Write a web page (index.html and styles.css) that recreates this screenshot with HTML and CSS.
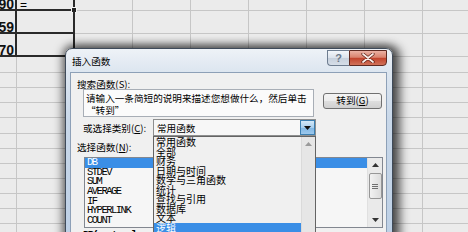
FILE: index.html
```html
<!DOCTYPE html>
<html lang="zh-CN">
<head>
<meta charset="utf-8">
<title>插入函数</title>
<link rel="stylesheet" href="styles.css">
</head>
<body>
<div class="sheet">
  <div class="row top r0">
    <div class="cell num">90</div>
    <div class="cell val eq">=<span class="handle"></span></div>
    <div class="fill"></div>
  </div>
  <div class="row top r1">
    <div class="cell num">59</div>
    <div class="cell val"></div>
    <div class="fill"></div>
  </div>
  <div class="row top r1">
    <div class="cell num">70</div>
    <div class="cell val"></div>
    <div class="fill"></div>
  </div>
  <div class="row h16"></div>
  <div class="row"></div>
  <div class="row"></div>
  <div class="row"></div>
  <div class="row h16"></div>
  <div class="row"></div>
  <div class="row"></div>
  <div class="row"></div>
  <div class="row"></div>
  <div class="row"></div>
  <div class="row"></div>
  <div class="row"></div>
</div>

<div class="dlg">
  <div class="titlebar">
    <span class="title">插入函数</span>
    <div class="capbtns">
      <span class="help">?</span>
      <span class="close">
        <svg width="14" height="10" viewBox="0 0 14 10"><path d="M2 1 L12 9 M12 1 L2 9" stroke="#5a1d12" stroke-width="3.2" stroke-linecap="round"/><path d="M2 1 L12 9 M12 1 L2 9" stroke="#fbeeea" stroke-width="1.8" stroke-linecap="round"/></svg>
      </span>
    </div>
  </div>
  <div class="client">
    <div class="lbl-search">搜索函数(<u>S</u>):</div>
    <div class="search-row">
      <div class="search-box">请输入一条简短的说明来描述您想做什么，然后单击<br>“转到”</div>
      <div class="go">转到(<u>G</u>)</div>
    </div>
    <div class="cat-row">
      <span class="lbl-cat">或选择类别(<u>C</u>):</span>
      <div class="select">
        <span class="sel-text">常用函数</span>
        <span class="arrow"><svg width="7" height="4" viewBox="0 0 7 4"><path d="M0 0 H7 L3.5 4 Z" fill="#111"/></svg></span>
      </div>
    </div>
    <div class="lbl-fn">选择函数(<u>N</u>):</div>
    <div class="listbox">
      <div class="items">
        <div class="item on">DB</div>
        <div class="item">STDEV</div>
        <div class="item">SUM</div>
        <div class="item">AVERAGE</div>
        <div class="item">IF</div>
        <div class="item">HYPERLINK</div>
        <div class="item">COUNT</div>
      </div>
      <div class="vscroll">
        <div class="sbtn"><svg width="7" height="4" viewBox="0 0 7 4"><path d="M0 4 H7 L3.5 0 Z" fill="#333"/></svg></div>
        <div class="thumb"><span class="grip"></span><span class="grip"></span><span class="grip"></span></div>
        <div class="track"></div>
        <div class="sbtn"><svg width="7" height="4" viewBox="0 0 7 4"><path d="M0 0 H7 L3.5 4 Z" fill="#333"/></svg></div>
      </div>
    </div>
    <div class="desc">DB(cost,salvage,life,period,month)</div>
  </div>

  <div class="popup">
    <div class="pitems">
      <div class="pitem">常用函数</div>
      <div class="pitem">全部</div>
      <div class="pitem">财务</div>
      <div class="pitem">日期与时间</div>
      <div class="pitem">数学与三角函数</div>
      <div class="pitem">统计</div>
      <div class="pitem">查找与引用</div>
      <div class="pitem">数据库</div>
      <div class="pitem">文本</div>
      <div class="pitem on">逻辑</div>
    </div>
    <div class="pscroll">
      <svg width="7" height="4" viewBox="0 0 7 4"><path d="M0 4 H7 L3.5 0 Z" fill="#9a9a9a"/></svg>
    </div>
  </div>
</div>
</body>
</html>
```

FILE: styles.css
```css
* { box-sizing: border-box; }
html, body { margin: 0; padding: 0; }
body {
  width: 468px;
  height: 232px;
  overflow: hidden;
  position: relative;
  background: #ebebeb;
  font-family: "Noto Sans CJK SC", "Liberation Sans", sans-serif;
  color: #000;
}

/* spreadsheet */
.sheet {
  height: 232px;
  background-color: #ebebeb;
  background-image: linear-gradient(to right, transparent 57px, #c6c6c6 57px);
  background-size: 58px 100%;
  background-position: 17px 0;
  background-repeat: repeat-x;
}
.row {
  display: flex;
  height: 15px;
  border-bottom: 1px solid #c6c6c6;
}
.row.h16 { height: 16px; }
.row.top { border-bottom: 0; }
.row.r0 { height: 11px; }
.row.r1 { height: 23px; }
.cell {
  flex: none;
  display: flex;
  align-items: flex-end;
  border-right: 2px solid #2a2a2a;
  border-bottom: 2px solid #2a2a2a;
}
.cell.num {
  width: 17px;
  overflow: hidden;
  justify-content: flex-end;
  padding-right: 1px;
  font: bold 14px/10px "Liberation Sans", sans-serif;
  color: #111;
}
.cell.val { width: 58px; position: relative; }
.cell.eq {
  align-items: flex-start;
  padding-left: 3px;
  font: 12px/10px "Liberation Sans", sans-serif;
}
.handle {
  position: absolute;
  right: -4px;
  bottom: -4px;
  width: 6px;
  height: 6px;
  background: #222;
  border: 1px solid #f4f4f4;
}
.fill { flex: 1; border-bottom: 1px solid #c6c6c6; }

/* dialog */
.dlg {
  position: absolute;
  left: 65px;
  top: 48px;
  width: 328px;
  height: 200px;
  border: 1px solid #3f4b5a;
  border-radius: 7px 7px 0 0;
  background: linear-gradient(#eef2f7, #dde6f0 22px, #c9d8e9 70px, #bccfe5);
  box-shadow: 0 0 8px 3px rgba(0,0,0,.5), 6px 0 10px 2px rgba(0,0,0,.45);
  padding: 0 5px 0 4px;
  display: flex;
  flex-direction: column;
  font-size: 9.6px;
}
.titlebar {
  height: 23px;
  flex: none;
  display: flex;
  align-items: flex-start;
}
.title {
  padding: 6px 0 0 2px;
  line-height: 12px;
  font-size: 9.6px;
}
.capbtns {
  margin-left: auto;
  margin-top: 1px;
  display: flex;
}
.help {
  width: 22px;
  height: 16px;
  border: 1px solid #6e7d90;
  border-right: 0;
  border-radius: 0 0 0 4px;
  background: linear-gradient(#f3f6fa, #dbe2eb 50%, #c6d0dd 51%, #d6dee8);
  font: bold 11px/14px "Liberation Sans", sans-serif;
  color: #6b7889;
  text-align: center;
}
.close {
  width: 38px;
  height: 16px;
  border: 1px solid #5e2a22;
  border-radius: 0 0 4px 0;
  background: linear-gradient(#ebb2a4, #d9826e 45%, #c2442d 52%, #d0725a);
  display: flex;
  align-items: center;
  justify-content: center;
}

.client {
  flex: 1;
  border: 1px solid #8da0b7;
  background: #f0f0f0;
  line-height: 10px;
  font-size: 9.6px;
}
.lbl-search {
  margin: 6px 0 0 6px;
  height: 10px;
}
.search-row {
  display: flex;
  margin-left: 12px;
}
.search-box {
  width: 231px;
  height: 28px;
  border: 1px solid #a8aeb6;
  background: #fbfbfb;
  padding: 2px 0 0 2px;
  line-height: 12px;
  white-space: nowrap;
}
.go {
  margin: 4px 0 0 9px;
  width: 59px;
  height: 16px;
  border: 1px solid #707070;
  border-radius: 3px;
  background: linear-gradient(#f4f4f4, #ececec 50%, #dedede 51%, #d0d0d0);
  line-height: 13px;
  text-align: center;
}
.cat-row {
  display: flex;
  align-items: center;
  margin-top: 2px;
}
.lbl-cat {
  margin-left: 12px;
  width: 70px;
}
.select {
  width: 163px;
  height: 17px;
  border: 1px solid #8e8f8f;
  background: #f7f7f7;
  display: flex;
  align-items: center;
  padding-left: 3px;
}
.arrow {
  margin-left: auto;
  width: 15px;
  height: 15px;
  border: 1px solid #3c7fb1;
  background: linear-gradient(#d4e8f7, #a9cfee 50%, #7fb6e4 51%, #9cc8ec);
  display: flex;
  align-items: center;
  justify-content: center;
}
.lbl-fn {
  margin: 6px 0 0 6px;
  height: 10px;
}
.listbox {
  margin: 5px 0 0 13px;
  width: 299px;
  height: 71px;
  border: 1px solid #828790;
  background: #f6f6f6;
  display: flex;
}
.items { flex: 1; }
.item {
  height: 9.7px;
  padding-left: 2px;
  font: 10.5px/9.7px "Liberation Mono", monospace;
  letter-spacing: -1.5px;
  color: #000;
}
.item.on { background: #3a8ee6; color: #fff; }
.vscroll {
  width: 15px;
  display: flex;
  flex-direction: column;
  align-items: center;
  background: #eaeaea;
  border-left: 1px solid #e0e0e0;
}
.sbtn {
  height: 14px;
  width: 100%;
  display: flex;
  align-items: center;
  justify-content: center;
}
.thumb {
  margin-top: 1px;
  width: 13px;
  height: 26px;
  border: 1px solid #979797;
  border-radius: 2px;
  background: linear-gradient(to right, #f2f2f2, #dcdcdc);
  display: flex;
  flex-direction: column;
  align-items: center;
  justify-content: center;
  gap: 1px;
}
.grip { width: 6px; height: 1px; background: #6f6f6f; }
.track { flex: 1; }
.desc {
  margin: 2px 0 0 12px;
  font: bold 10.5px/10px "Liberation Mono", monospace;
  letter-spacing: -1.5px;
}

/* dropdown popup */
.popup {
  position: absolute;
  left: 87px;
  top: 87px;
  width: 163px;
  height: 120px;
  border: 1px solid #646464;
  background: #f0f0f0;
  display: flex;
}
.pitems { flex: 1; }
.pitem {
  height: 9.5px;
  line-height: 9.5px;
  padding-left: 2px;
  font-size: 10px;
  white-space: nowrap;
}
.pitem.on { background: #3a8ee6; color: #fff; }
.pscroll {
  width: 14px;
  background: #e6e6e6;
  border-left: 1px solid #dadada;
  display: flex;
  justify-content: center;
  padding-top: 5px;
}
.pscroll svg { display: block; }
```
